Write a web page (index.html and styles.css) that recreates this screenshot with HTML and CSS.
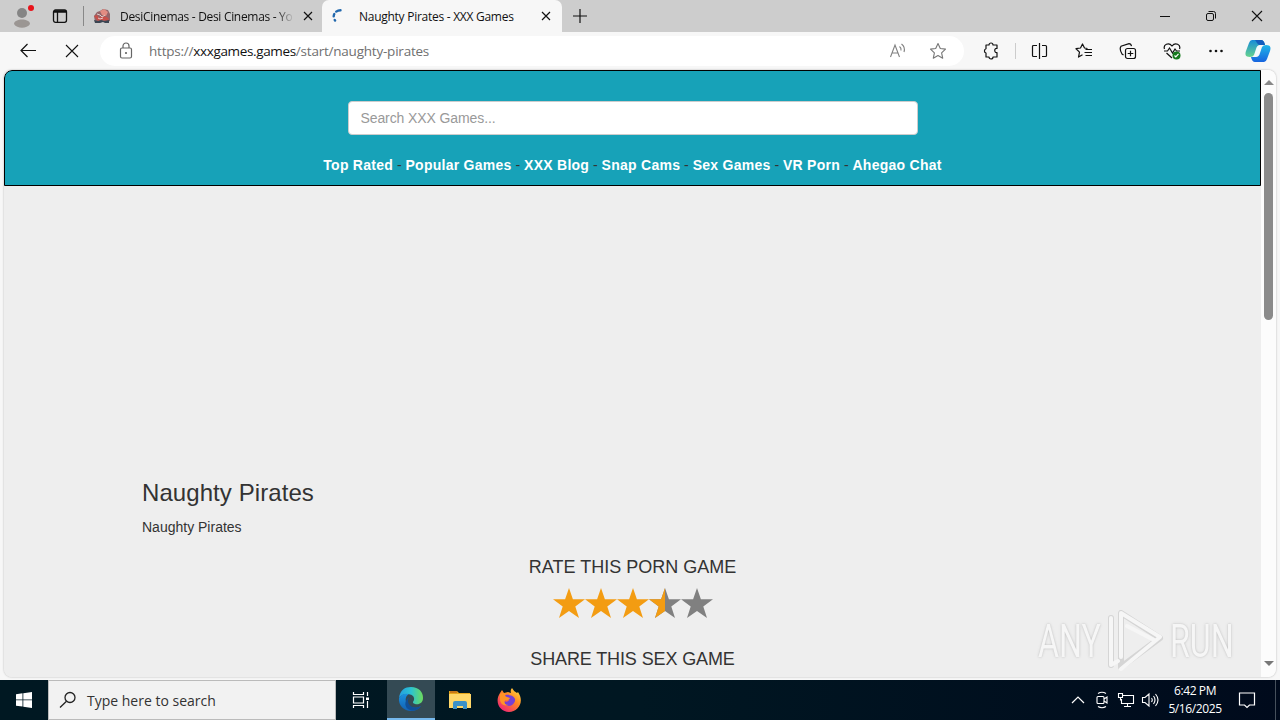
FILE: index.html
```html
<!DOCTYPE html>
<html lang="en">
<head>
  <meta charset="UTF-8" />
  <title>Naughty Pirates - XXX Games</title>
  <link rel="stylesheet" href="styles.css">
</head>
<body>
  <div class="tabbar">
    <svg class="profile" width="24" height="24" viewBox="0 0 24 24">
      <circle cx="12" cy="8" r="5" fill="#858585"/>
      <path d="M4 19c0-6 16-6 16 0-3 5-13 5-16 0z" fill="#9b9693"/>
      <circle cx="21" cy="3" r="3" fill="#e8131b"/>
    </svg>
    <svg class="workspaces" width="16" height="16" viewBox="0 0 16 16" fill="none" stroke="#111" stroke-width="1.3">
      <rect x="1.5" y="2" width="13" height="12.3" rx="2"/>
      <path d="M1.500 4h13M2 3h12M5.500 4v10"/>
    </svg>
    <span class="tab-divider"></span>
    <div class="tab">
      <svg class="favicon" width="18" height="16" viewBox="0 0 18 16">
        <path d="M1 8l3-4 3-1 3-2 5 1 2 4v7l-4 1H2z" fill="#93656a"/>
        <path d="M7 3l4-2 4 3-2 4-4-1z" fill="#e28c82"/>
        <path d="M1 8l3-1 2 3 3-2 5 1 2 2-2 2-5-1-4 1z" fill="#c9504a"/>
        <path d="M1 12l4 1 3-1 3 1 5-1v3h-4l-2-1-3 1H2z" fill="#3b4552"/>
        <path d="M4 6l3 1 2 2 3-2M5 10l2 1 3-1" stroke="#e5ccc8" fill="none"/>
      </svg>
      <span class="tab-title faded">DesiCinemas - Desi Cinemas - Yo</span>
      <svg class="tab-close" width="10" height="10" viewBox="0 0 10 10" stroke="#111" stroke-width="1.2"><path d="M1 1l8 8M9 1l-8 8"/></svg>
    </div>
    <div class="tab active">
      <svg class="favicon" width="16" height="16" viewBox="0 0 16 16" fill="none" stroke="#2268ad" stroke-width="2.4" stroke-linecap="round">
        <path d="M9.500 2.200Q7 2.200 5.200 3.600M3.300 6Q2.800 7 2.700 8.300M3.700 12l.4.500"/>
      </svg>
      <span class="tab-title">Naughty Pirates - XXX Games</span>
      <svg class="tab-close" width="10" height="10" viewBox="0 0 10 10" stroke="#111" stroke-width="1.2"><path d="M1 1l8 8M9 1l-8 8"/></svg>
    </div>
    <svg class="new-tab" width="14" height="14" viewBox="0 0 14 14" stroke="#111" stroke-width="1.2"><path d="M7 0v14M0 7h14"/></svg>
    <div class="window-buttons">
      <svg width="12" height="12" viewBox="0 0 12 12" stroke="#111"><path d="M1 6.500h10"/></svg>
      <svg width="12" height="12" viewBox="0 0 12 12" fill="none" stroke="#111"><rect x="1.500" y="3.500" width="7" height="7" rx="1.500"/><path d="M3.500 1.500h5a2 2 0 0 1 2 2v5"/></svg>
      <svg width="12" height="12" viewBox="0 0 12 12" stroke="#111" stroke-width="1.100"><path d="M1 1l10 10M11 1L1 11"/></svg>
    </div>
  </div>

  <div class="toolbar">
    <div class="nav-buttons">
      <svg width="18" height="16" viewBox="0 0 18 16" fill="none" stroke="#111" stroke-width="1.200"><path d="M17 7.500H2M8.500 1L2 7.500 8.500 14"/></svg>
      <svg width="16" height="16" viewBox="0 0 16 16" stroke="#111" stroke-width="1.100"><path d="M2 2l12 12M14 2L2 14"/></svg>
    </div>
    <div class="address">
      <svg class="lock" width="14" height="18" viewBox="0 0 14 18" fill="none" stroke="#666" stroke-width="1.200">
        <rect x="1.500" y="6" width="11" height="10" rx="1.500"/><path d="M4 6V4a3 3 0 0 1 6 0v2"/><circle cx="7" cy="11" r=".5"/>
      </svg>
      <span class="url">https://<b>xxxgames.games</b>/start/naughty-pirates</span>
      <svg class="read" width="18" height="18" viewBox="0 0 18 18" fill="none" stroke="#808080" stroke-width="1.100">
        <path d="M1.500 15L6 3l4.500 12M3 11h6M10.500 4.500q2 1.500 1.500 4M12.500 2q4 3 2.500 8"/>
      </svg>
      <svg class="fav" width="18" height="18" viewBox="0 0 18 18" fill="none" stroke="#777" stroke-width="1.100" stroke-linejoin="round">
        <path d="M9 1.500l2.300 5 5.200.6-3.900 3.700 1.100 5.400L9 13.500l-4.700 2.700 1.100-5.400L1.500 7.100l5.200-.6z"/>
      </svg>
    </div>
    <div class="actions">
      <svg width="18" height="18" viewBox="0 0 18 18" fill="none" stroke="#111" stroke-width="1.200" stroke-linejoin="round">
        <path d="M4 3h3a2 2 0 0 1 4 0h4v3.500c-3-.6-3 4.600 0 4V15h-4a2 2 0 0 1-4 0H4v-4a2.200 2.200 0 0 1 0-4.200z"/>
      </svg>
      <span class="separator"></span>
      <svg width="18" height="18" viewBox="0 0 18 18" fill="none" stroke="#111" stroke-width="1.200">
        <path d="M8.500 1v16M6 3.500H2.500a1 1 0 0 0-1 1v9a1 1 0 0 0 1 1H6M11 3.500h3.500a1 1 0 0 1 1 1v9a1 1 0 0 1-1 1H11"/>
      </svg>
      <svg width="18" height="18" viewBox="0 0 18 18" fill="none" stroke="#111" stroke-width="1.200" stroke-linejoin="round">
        <path d="M12.500 6.500L9.500 6 7.500 2 5.500 6l-4.500.7 3.500 3.400-1 5 4-2.300M10.500 7.500H17M9.500 10.500H17M10.500 13.500H17"/>
      </svg>
      <svg width="18" height="18" viewBox="0 0 18 18" fill="none" stroke="#111" stroke-width="1.200">
        <rect x="6.500" y="6.500" width="10" height="10" rx="2"/><path d="M11.500 8.700v5.600M8.700 11.500h5.600M4.500 13L3 12Q0 7 2 4.300L10 1.700q2 0 2.500 2.500"/>
      </svg>
      <svg width="18" height="18" viewBox="0 0 18 18" fill="none" stroke="#111" stroke-width="1.200">
        <path d="M1.500 7C0 3 5.500-.5 9 4c3.500-4.500 9-1 7.500 3M3.500 11L9 16M1 9h3.500L6.500 6l3 5L12 7l1.500 2H17"/>
        <circle cx="13.500" cy="13.500" r="4" fill="#167a1d" stroke="none"/><path d="M11.500 13.500l1.300 1.400 2.700-3" stroke="#fff"/>
      </svg>
      <svg width="18" height="18" viewBox="0 0 18 18" fill="#111"><circle cx="3.500" cy="9" r="1.300"/><circle cx="9" cy="9" r="1.300"/><circle cx="14.500" cy="9" r="1.300"/></svg>
      <svg width="26" height="24" viewBox="0 0 26 24">
        <defs>
          <linearGradient id="cp1" x2="0" y2="1"><stop stop-color="#168bd8"/><stop offset="1" stop-color="#66d38e"/></linearGradient>
          <linearGradient id="cp2" x2="0" y2="1"><stop stop-color="#20b6e8"/><stop offset="1" stop-color="#1764df"/></linearGradient>
        </defs>
        <path d="M7 1h9q3 0 4 5h-5q-3 0-4 4l-2 6q-1 2-4 2c-5 0-5-3-4-6L4 4q1-3 3-3z" fill="url(#cp1)"/>
        <path d="M19 23h-9q-3 0-4-5h5q3 0 4-4l2-6q1-2 4-2c5 0 5 3 4 6l-3 8q-1 3-3 3z" fill="url(#cp2)"/>
        <path d="M10 1h6q3 0 4 5h-5q-2 0-3-2T10 1z" fill="#145dbd"/>
        <path d="M12.500 8H15l-2.500 8.500H10z" fill="#eefaff"/>
      </svg>
    </div>
  </div>

  <div class="viewport">
    <div class="page">
      <header class="site-header">
        <input class="search" type="text" placeholder="Search XXX Games...">
        <nav class="links"><a>Top Rated</a> - <a>Popular Games</a> - <a>XXX Blog</a> - <a>Snap Cams</a> - <a>Sex Games</a> - <a>VR Porn</a> - <a>Ahegao Chat</a></nav>
      </header>
      <main class="game">
        <h1>Naughty Pirates</h1>
        <p>Naughty Pirates</p>
        <section class="rating">
          <h4>RATE THIS PORN GAME</h4>
          <svg class="stars" width="160" height="32" viewBox="0 0 160 32">
            <defs><path id="star" d="M16 1l3.900 11.200H32l-9.700 7.200L26 31l-10-7-10 7 3.700-11.600L0 12.200h12.100z"/></defs>
            <g fill="#f39c12"><use href="#star"/><use href="#star" x="32"/><use href="#star" x="64"/></g>
            <g fill="#808080"><use href="#star" x="96"/><use href="#star" x="128"/></g>
            <path d="M112 1v23l-10 7 3.700-11.600L96 12.200h12.100z" fill="#f39c12"/>
          </svg>
          <h4 class="share">SHARE THIS SEX GAME</h4>
        </section>
      </main>
    </div>
    <div class="scrollbar">
      <span class="arrow up"></span>
      <span class="thumb"></span>
      <span class="arrow down"></span>
    </div>
  </div>

  <div class="taskbar">
    <div class="start">
      <svg width="16" height="16" viewBox="0 0 16 16" fill="#fff"><path d="M0 2.200L6.500 1.300v6.200H0zM7.300 1.200L16 0v7.500H7.300zM0 8.300h6.500v6.300L0 13.700zM7.300 8.300H16V16l-8.700-1.200z"/></svg>
    </div>
    <div class="task-search">
      <svg width="18" height="18" viewBox="0 0 18 18" fill="none" stroke="#222" stroke-width="1.300"><circle cx="11" cy="6.500" r="5"/><path d="M7.500 10.300L1 16.500"/></svg>
      <span>Type here to search</span>
    </div>
    <div class="task">
      <svg width="18" height="18" viewBox="0 0 18 18" fill="none" stroke="#fff" stroke-width="1.200"><path d="M1.500 1v2.500h10V1M1.500 17v-2.500h10V17M1.500 6h10v6h-10zM15.500 1v4M15.500 10v7"/><path d="M14 6.500h3v2.500h-3z" fill="#fff" stroke="none"/></svg>
    </div>
    <div class="task running">
      <svg width="26" height="26" viewBox="0 0 26 26">
        <defs>
          <linearGradient id="edgeTop"><stop stop-color="#249de0"/><stop offset=".5" stop-color="#2bc3d2"/><stop offset="1" stop-color="#6ddb5c"/></linearGradient>
          <linearGradient id="edgeLow" x2="0" y2="1"><stop stop-color="#1b91df"/><stop offset="1" stop-color="#1261b2"/></linearGradient>
        </defs>
        <path d="M1 12C2 4 7 1 13 1c8 0 12 5 12 11 0 5-4 7-8 6-3-1-2-2-1-4 1-4-3-6-7-6-4 0-7 2-8 4z" fill="url(#edgeTop)"/>
        <path d="M1 12c2-4 6-5 10-4-4 2-4 7-2 10 3 4 9 5 14 2-2 3-6 5-10 5C6 25 0 19 1 12z" fill="url(#edgeLow)"/>
        <path d="M11 11c-4 8 5 13 12 9-3 5-8 5-11 4-6-2-6-9-1-13z" fill="#104f98"/>
      </svg>
    </div>
    <div class="task">
      <svg width="24" height="22" viewBox="0 0 24 22"><path d="M1 2h8l2 2h11v15H1z" fill="#e6a61b"/><path d="M1 5h22v14H1z" fill="#ffd769"/><path d="M5 20v-6q0-2 2-2h10q2 0 2 2v6h-4v-3H9v3z" fill="#3b91c9"/><path d="M2 3h7" stroke="#c97816" stroke-width="2"/></svg>
    </div>
    <div class="task">
      <svg width="24" height="24" viewBox="0 0 24 24">
        <defs><linearGradient id="fox" x1="1" x2=".2" y2="1"><stop stop-color="#ffe64a"/><stop offset=".45" stop-color="#ff8a22"/><stop offset="1" stop-color="#f02078"/></linearGradient></defs>
        <path d="M3 5l2-3 2 3 4-1 3 1q-1-3 1-5 2 4 5 5l1-1c7 10 0 20-9 20S-3 14 3 5z" fill="url(#fox)"/>
        <path d="M8 7c9-1 12 4 9 8-3 5-11 3-10-2 2 1 4 1 5-1-2 0-4-1-4-5z" fill="#7540d5"/>
        <path d="M3 6q2-2 6 0-2 2 1 3l3 1q-1 3-5 2-2 5 4 5-8 2-9-5z" fill="#ff9426"/>
      </svg>
    </div>
    <div class="tray">
      <svg width="14" height="18" viewBox="0 0 14 18" fill="none" stroke="#fff" stroke-width="1.200"><path d="M1 12l6-6 6 6"/></svg>
      <svg class="camera" width="14" height="18" viewBox="0 0 14 18" fill="none" stroke="#fff" stroke-width="1.100"><rect x="2" y="5.500" width="7" height="7" rx="1"/><path d="M9 8l3-2v6l-3-2M3 2.500q4-2.500 8 0M3 15.500q4 2.500 8 0"/></svg>
      <svg width="18" height="18" viewBox="0 0 18 18" fill="none" stroke="#fff" stroke-width="1.100"><path d="M6 4.500h10.500v8H4.500V8M10.500 12.500v3M7 15.500h7M1.500 2.500h4v4h-4zM3.500 6.500v3"/></svg>
      <svg width="18" height="18" viewBox="0 0 18 18" fill="none" stroke="#fff" stroke-width="1.100"><path d="M1.500 6.500H4L8 3v12l-4-3.500H1.500zM10.500 7q1.500 2 0 4M12.500 5q3 4 0 8M14.500 3q5 6 0 12"/></svg>
      <div class="clock"><span>6:42 PM</span><span>5/16/2025</span></div>
      <svg width="18" height="18" viewBox="0 0 18 18" fill="none" stroke="#fff" stroke-width="1.200"><path d="M1.500 2h15v12h-5l-2.500 2.500L6.500 14h-5z"/></svg>
      <span class="show-desktop"></span>
    </div>
  </div>

  <div class="watermark">
    <span>ANY</span>
    <svg width="58" height="64" viewBox="0 0 58 64" fill="none" stroke-linejoin="round" stroke-linecap="round">
      <g stroke="#cfcfcf" stroke-width="6"><path d="M4 9v47M14 4v54L53 29z"/></g>
      <g stroke="#f8f8f8" stroke-width="4"><path d="M4 9v47l7-4M14 48V4l39 24-39 32M20 17l27 14"/></g>
    </svg>
    <span>RUN</span>
  </div>
</body>
</html>
```
FILE: styles.css
```css
* {
  box-sizing: border-box;
}

body {
  margin: 0;
  width: 1280px;
  height: 720px;
  overflow: hidden;
  background: #f7f7f7;
  font-family: "Open Sans", "Noto Sans", sans-serif;
  display: flex;
  flex-direction: column;
}

svg {
  display: block;
  flex: none;
}

/* tabs */
.tabbar {
  height: 32px;
  background: #cdcdcd;
  display: flex;
  align-items: center;
  flex: none;
}

.profile {
  margin-left: 10px;
  margin-top: 2px;
}

.workspaces {
  margin-left: 18px;
}

.tab-divider {
  width: 1px;
  height: 20px;
  margin-left: 15px;
  background: #888;
}

.tab {
  width: 238px;
  height: 32px;
  padding-left: 9px;
  display: flex;
  align-items: center;
}

.tab.active {
  width: 240px;
  background: #f7f7f7;
  border-radius: 7px 7px 0 0;
}

.tab-title {
  width: 174px;
  margin-left: 9px;
  font-size: 12px;
  letter-spacing: -0.27px;
  white-space: nowrap;
  color: #111;
}

.tab.active .tab-title {
  width: 173px;
  margin-left: 12px;
}

.faded {
  letter-spacing: -0.31px;
  -webkit-mask-image: linear-gradient(90deg, #000 90%, transparent);
}

.tab-close {
  margin-left: 9px;
}

.new-tab {
  margin-left: 11px;
}

.window-buttons {
  display: flex;
  gap: 34px;
  margin-left: auto;
  margin-right: 17px;
}

/* toolbar */
.toolbar {
  height: 38px;
  display: flex;
  align-items: center;
  flex: none;
}

.nav-buttons {
  width: 100px;
  padding-left: 19px;
  display: flex;
  gap: 27px;
}

.address {
  width: 864px;
  height: 30px;
  padding: 0 17px 0 19px;
  border-radius: 15px;
  background: #fff;
  display: flex;
  align-items: center;
}

.url {
  margin-left: 16px;
  font-size: 13.5px;
  letter-spacing: -0.22px;
  color: #707070;
}

.url b {
  font-weight: 400;
  letter-spacing: -0.35px;
  color: #111;
}

.read {
  margin-left: auto;
}

.fav {
  margin-left: 22px;
}

.actions {
  display: flex;
  align-items: center;
  gap: 26px;
  margin-left: 18px;
}

.separator {
  width: 1px;
  height: 16px;
  margin: 0 -11px 0 -11px;
  background: #ccc;
}

.actions svg:last-child {
  margin-left: -6px;
}

/* web page */
.viewport {
  width: 1272px;
  height: 607px;
  margin: 0 4px 3px;
  border-radius: 8px;
  overflow: hidden;
  display: flex;
  flex: none;
  box-shadow: 0 0 2px #aaa;
}

.page {
  width: 1257px;
  background: #eee;
  color: #333;
  font-family: "Liberation Sans", Arial, sans-serif;
}

.site-header {
  height: 116px;
  padding-top: 30px;
  border: 1px solid #000;
  border-top-left-radius: 8px;
  background: #17a2b8;
  display: flex;
  flex-direction: column;
  align-items: center;
}

.search {
  width: 570px;
  height: 34px;
  padding: 6px 12px;
  border: 1px solid #ccc;
  border-radius: 4px;
  background: #fff;
  font: 14px "Liberation Sans", Arial, sans-serif;
  letter-spacing: -0.1px;
}

.search::placeholder {
  color: #999;
}

.links {
  margin-top: 20px;
  font-size: 14px;
  line-height: 20px;
  white-space: nowrap;
}

.links a {
  font-weight: bold;
  letter-spacing: 0.26px;
  color: #fff;
}

.game {
  padding: 293px 138px 0;
}

.game h1 {
  margin: 0;
  font-size: 24px;
  font-weight: 400;
  line-height: 28px;
  letter-spacing: 0.08px;
}

.game p {
  margin: 10px 0 0;
  font-size: 14px;
  line-height: 20px;
}

.rating {
  display: flex;
  flex-direction: column;
  align-items: center;
}

.rating h4 {
  margin: 20px 0 0;
  font-size: 18px;
  font-weight: 400;
  line-height: 20px;
}

.rating .share {
  letter-spacing: -0.12px;
}

.stars {
  margin: 10px 0;
}

.scrollbar {
  width: 15px;
  background: #fcfcfc;
  display: flex;
  flex-direction: column;
  align-items: center;
}

.arrow {
  border: 5px solid transparent;
}

.arrow.up {
  margin-top: 5px;
  border-bottom-color: #888;
}

.arrow.down {
  margin: auto 0 6px;
  border-top-color: #777;
}

.thumb {
  width: 9px;
  height: 227px;
  margin-top: 8px;
  border-radius: 5px;
  background: #8b8b8b;
}

/* taskbar */
.taskbar {
  height: 40px;
  background: linear-gradient(90deg, #001822, #001722 50%, #000a1c);
  color: #fff;
  display: flex;
  flex: none;
}

.start,
.task {
  width: 48px;
  display: flex;
  align-items: center;
  justify-content: center;
}

.task-search {
  width: 288px;
  padding-left: 10px;
  border: 1px solid #bbb;
  background: #f2f2f2;
  color: #333;
  font-size: 14px;
  display: flex;
  align-items: center;
  gap: 10px;
}

.task {
  width: 49px;
}

.task.running {
  width: 48px;
  margin-left: 2px;
  background: #344a54;
  border-bottom: 2px solid #76b9ed;
}

.tray {
  margin-left: auto;
  display: flex;
  align-items: center;
}

.tray svg {
  margin-right: 6px;
}

.tray .camera {
  margin: 0 8px 0 4px;
}

.clock {
  width: 62px;
  margin-left: -1px;
  font-size: 12px;
  line-height: 18px;
  letter-spacing: -0.4px;
  display: flex;
  flex-direction: column;
  align-items: center;
}

.clock + svg {
  margin-left: 12px;
}

.show-desktop {
  width: 1px;
  height: 40px;
  margin: 0 4px 0 13px;
  background: #46505c;
}

/* watermark laid over the screen */
.watermark {
  position: absolute;
  left: 1038px;
  top: 609px;
  height: 64px;
  display: flex;
  align-items: center;
  gap: 5px;
  opacity: 0.8;
  color: #f8f8f8;
  font: 46px Roboto, sans-serif;
  text-shadow: 0 0 3px #aaa;
}

.watermark span {
  width: 64px;
  transform: scaleX(0.7);
  transform-origin: left;
}
```
